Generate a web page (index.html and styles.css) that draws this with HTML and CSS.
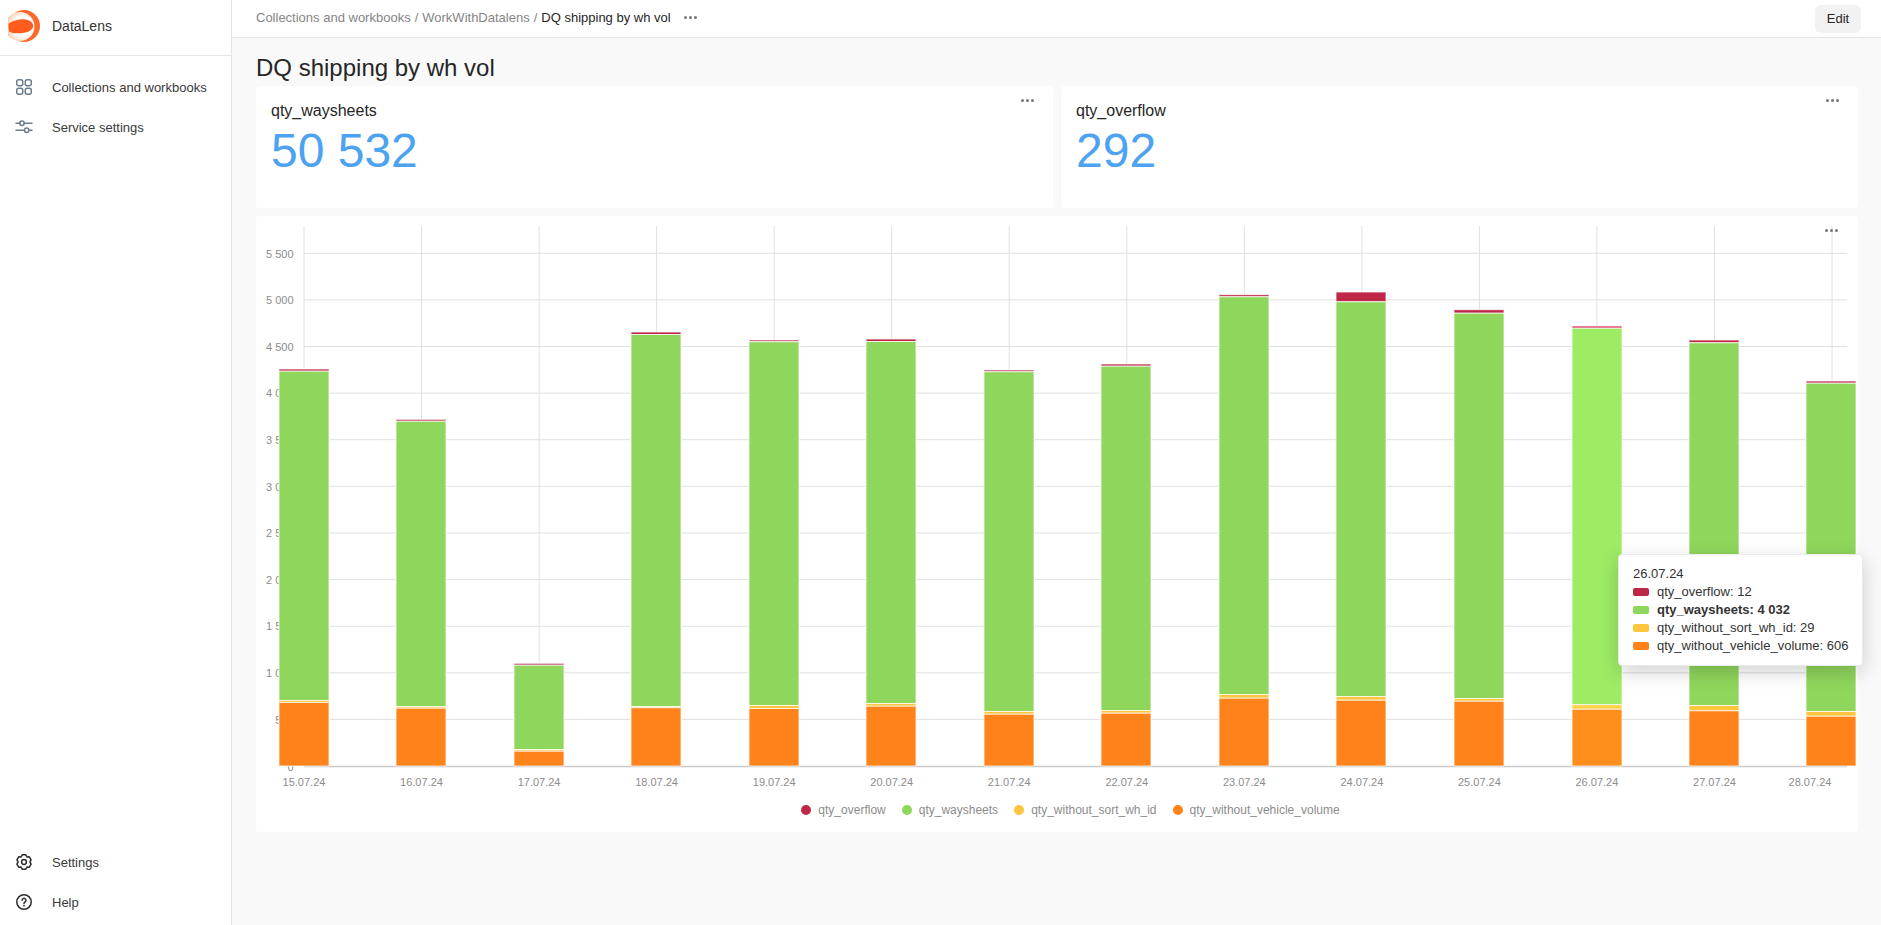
FILE: index.html
```html
<!DOCTYPE html>
<html lang="en">
<head>
<meta charset="utf-8">
<title>DQ shipping by wh vol</title>
<link rel="stylesheet" href="styles.css">
</head>
<body>
<div class="app">
  <aside class="sidebar">
    <div class="brand">
      <svg class="logo" width="32" height="32" viewBox="0 0 32 32">
        <defs>
          <radialGradient id="logoInner" cx="0.6" cy="0.5" r="0.62">
            <stop offset="0.55" stop-color="#ffffff"/>
            <stop offset="0.85" stop-color="#ffd9c4"/>
            <stop offset="1" stop-color="#ff9a66"/>
          </radialGradient>
        </defs>
        <circle cx="16" cy="16" r="16" fill="#fb6a2a"/>
        <circle cx="12" cy="16.500" r="14.500" fill="url(#logoInner)"/>
        <path d="M.5 13.500C6 10 12 9 16 9.300C21 9.500 25 12.500 25.300 16C25 20 20 23 12 23.300C8 23.500 4 23 1.300 21.700C.5 19 .2 16 .5 13.500Z" fill="#ff5c1e"/>
      </svg>
      <span class="brand-name">DataLens</span>
    </div>
    <nav class="nav">
      <a class="nav-item">
        <svg class="icon icon-slate" width="16" height="16" viewBox="0 0 16 16"><rect x=".75" y=".75" width="6" height="6" rx="2"/><rect x="9.250" y=".75" width="6" height="6" rx="2"/><rect x=".75" y="9.250" width="6" height="6" rx="2"/><rect x="9.250" y="9.250" width="6" height="6" rx="2"/></svg>
        <span>Collections and workbooks</span>
      </a>
      <a class="nav-item">
        <svg class="icon icon-slate" width="16" height="16" viewBox="0 0 16 16"><path d="M0 4.300H3.800M8.200 4.300H16M0 11.300H8.400M13 11.300H16"/><circle cx="6" cy="4.300" r="2.200"/><circle cx="10.700" cy="11.300" r="2.200"/></svg>
        <span>Service settings</span>
      </a>
    </nav>
    <nav class="nav nav-bottom">
      <a class="nav-item">
        <svg class="icon icon-dark" width="16" height="16" viewBox="0 0 16 16"><path d="M9.790 .82H6.210L5.050 2.890L2.680 2.860L.89 5.960L2.100 8L.89 10.040L2.680 13.140L5.050 13.110L6.210 15.180H9.790L10.950 13.110L13.320 13.140L15.110 10.040L13.900 8L15.110 5.960L13.320 2.860L10.950 2.890Z"/><circle cx="8" cy="8" r="2.400"/></svg>
        <span>Settings</span>
      </a>
      <a class="nav-item">
        <svg class="icon icon-dark" width="16" height="16" viewBox="0 0 16 16"><circle cx="8" cy="8" r="7.250"/><path d="M6.100 6.300A1.950 1.950 0 1 1 9.200 7.900C8.500 8.400 8 8.800 8 9.600"/><circle class="icon-dot" cx="8" cy="11.700" r=".9"/></svg>
        <span>Help</span>
      </a>
    </nav>
  </aside>

  <main class="main">
    <header class="topbar">
      <div class="crumbs">
        <span class="crumb">Collections and workbooks</span>
        <span class="crumb-sep">/</span>
        <span class="crumb">WorkWithDatalens</span>
        <span class="crumb-sep">/</span>
        <span class="crumb-current">DQ shipping by wh vol</span>
        <span class="dots dots-crumb"><i></i><i></i><i></i></span>
      </div>
      <button class="edit-btn">Edit</button>
    </header>

    <div class="page">
      <h1 class="title">DQ shipping by wh vol</h1>
      <div class="metrics">
        <section class="card metric">
          <span class="dots dots-card"><i></i><i></i><i></i></span>
          <div class="metric-label">qty_waysheets</div>
          <div class="metric-value">50 532</div>
        </section>
        <section class="card metric">
          <span class="dots dots-card"><i></i><i></i><i></i></span>
          <div class="metric-label">qty_overflow</div>
          <div class="metric-value">292</div>
        </section>
      </div>

      <section class="card chart-card">
        <span class="dots dots-chart"><i></i><i></i><i></i></span>
        <svg class="chart" width="1602" height="580" viewBox="256 216 1602 580">
          <g class="grid">
            <path d="M304 226V766M421.500 226V766M539.100 226V766M656.600 226V766M774.200 226V766M891.700 226V766M1009.200 226V766M1126.800 226V766M1244.300 226V766M1361.900 226V766M1479.400 226V766M1596.900 226V766M1714.500 226V766M1832 226V766"/>
            <path d="M304 253.300H1847M304 299.900H1847M304 346.500H1847M304 393.100H1847M304 439.700H1847M304 486.300H1847M304 533H1847M304 579.600H1847M304 626.200H1847M304 672.800H1847M304 719.400H1847"/>
          </g>
          <g class="y-labels">
            <text x="293.500" y="257.500">5 500</text>
            <text x="293.500" y="304">5 000</text>
            <text x="293.500" y="350.500">4 500</text>
            <text x="293.500" y="397">4 000</text>
            <text x="293.500" y="444">3 500</text>
            <text x="293.500" y="490.500">3 000</text>
            <text x="293.500" y="537">2 500</text>
            <text x="293.500" y="584">2 000</text>
            <text x="293.500" y="630">1 500</text>
            <text x="293.500" y="677">1 000</text>
            <text x="293.500" y="723.500">500</text>
            <text x="293.500" y="771">0</text>
          </g>
          <path class="axis" d="M304 766.500H1847"/>
          <g class="bars">
            <g class="s-red">
              <rect x="279" y="369" width="50" height="2.200"/><rect x="396" y="419.300" width="50" height="1.900"/><rect x="514" y="663.300" width="50" height="1.900"/><rect x="631" y="332" width="50" height="2.500"/><rect x="749" y="340" width="50" height="1.800"/><rect x="866" y="339" width="50" height="2.500"/><rect x="984" y="370" width="50" height="1.800"/><rect x="1101" y="364" width="50" height="2.200"/><rect x="1219" y="294.700" width="50" height="2.100"/><rect x="1336" y="292" width="50" height="9.800"/><rect x="1454" y="309.700" width="50" height="3.500"/><rect class="hl" x="1572" y="326" width="50" height="2.200"/><rect x="1689" y="340" width="50" height="2.800"/><rect x="1806" y="381" width="50" height="2.200"/>
            </g>
            <g class="s-green">
              <rect x="279" y="371.200" width="50" height="329.300"/><rect x="396" y="421.200" width="50" height="285.300"/><rect x="514" y="665.200" width="50" height="84.300"/><rect x="631" y="334.500" width="50" height="372"/><rect x="749" y="341.800" width="50" height="363.700"/><rect x="866" y="341.500" width="50" height="362"/><rect x="984" y="371.800" width="50" height="339.700"/><rect x="1101" y="366.200" width="50" height="344.300"/><rect x="1219" y="296.800" width="50" height="397.700"/><rect x="1336" y="301.800" width="50" height="394.700"/><rect x="1454" y="313.200" width="50" height="385.300"/><rect class="hl" x="1572" y="328.200" width="50" height="376.600"/><rect x="1689" y="342.800" width="50" height="362.700"/><rect x="1806" y="383.200" width="50" height="328.300"/>
            </g>
            <g class="s-yellow">
              <rect x="279" y="700.500" width="50" height="2"/><rect x="396" y="706.500" width="50" height="1.700"/><rect x="514" y="749.500" width="50" height="1.700"/><rect x="631" y="706.500" width="50" height="1.300"/><rect x="749" y="705.500" width="50" height="3"/><rect x="866" y="703.500" width="50" height="2.700"/><rect x="984" y="711.500" width="50" height="2.700"/><rect x="1101" y="710.500" width="50" height="2.700"/><rect x="1219" y="694.500" width="50" height="3.700"/><rect x="1336" y="696.500" width="50" height="3.700"/><rect x="1454" y="698.500" width="50" height="2.700"/><rect class="hl" x="1572" y="704.800" width="50" height="4.400"/><rect x="1689" y="705.500" width="50" height="5.300"/><rect x="1806" y="711.500" width="50" height="4.700"/>
            </g>
            <g class="s-orange">
              <rect x="279" y="702.500" width="50" height="63.500"/><rect x="396" y="708.200" width="50" height="57.800"/><rect x="514" y="751.200" width="50" height="14.800"/><rect x="631" y="707.800" width="50" height="58.200"/><rect x="749" y="708.500" width="50" height="57.500"/><rect x="866" y="706.200" width="50" height="59.800"/><rect x="984" y="714.200" width="50" height="51.800"/><rect x="1101" y="713.200" width="50" height="52.800"/><rect x="1219" y="698.200" width="50" height="67.800"/><rect x="1336" y="700.200" width="50" height="65.800"/><rect x="1454" y="701.200" width="50" height="64.800"/><rect class="hl" x="1572" y="709.200" width="50" height="56.800"/><rect x="1689" y="710.800" width="50" height="55.200"/><rect x="1806" y="716.200" width="50" height="49.800"/>
            </g>
          </g>
          <g class="x-labels">
            <text x="304" y="786">15.07.24</text>
            <text x="421.500" y="786">16.07.24</text>
            <text x="539.100" y="786">17.07.24</text>
            <text x="656.600" y="786">18.07.24</text>
            <text x="774.200" y="786">19.07.24</text>
            <text x="891.700" y="786">20.07.24</text>
            <text x="1009.200" y="786">21.07.24</text>
            <text x="1126.800" y="786">22.07.24</text>
            <text x="1244.300" y="786">23.07.24</text>
            <text x="1361.900" y="786">24.07.24</text>
            <text x="1479.400" y="786">25.07.24</text>
            <text x="1596.900" y="786">26.07.24</text>
            <text x="1714.500" y="786">27.07.24</text>
            <text x="1810" y="786">28.07.24</text>
          </g>
        </svg>
        <div class="legend">
          <span class="legend-item"><i class="legend-dot c-red"></i>qty_overflow</span>
          <span class="legend-item"><i class="legend-dot c-green"></i>qty_waysheets</span>
          <span class="legend-item"><i class="legend-dot c-yellow"></i>qty_without_sort_wh_id</span>
          <span class="legend-item"><i class="legend-dot c-orange"></i>qty_without_vehicle_volume</span>
        </div>
      </section>
    </div>

    <div class="tooltip">
      <div class="tip-row">26.07.24</div>
      <div class="tip-row"><i class="tip-swatch c-red"></i>qty_overflow: 12</div>
      <div class="tip-row tip-active"><i class="tip-swatch c-green"></i>qty_waysheets: 4 032</div>
      <div class="tip-row"><i class="tip-swatch c-yellow"></i>qty_without_sort_wh_id: 29</div>
      <div class="tip-row"><i class="tip-swatch c-orange"></i>qty_without_vehicle_volume: 606</div>
    </div>
  </main>
</div>
</body>
</html>
```

FILE: styles.css
```css
* { box-sizing: border-box; }

html, body {
  margin: 0;
  height: 100%;
  overflow: hidden;
}

body {
  font-family: "Liberation Sans", Arial, sans-serif;
  font-size: 13px;
  color: #262626;
  background: #f9f9f9;
}

.app {
  display: flex;
  height: 100vh;
}

/* Sidebar */
.sidebar {
  width: 232px;
  flex: none;
  display: flex;
  flex-direction: column;
  background: #fff;
  border-right: 1px solid #e5e5e5;
}

.brand {
  height: 56px;
  display: flex;
  align-items: center;
  gap: 12px;
  padding: 0 8px;
  flex: none;
  border-bottom: 1px solid #e5e5e5;
}

.logo { flex: none; margin-top: -4px; }

.brand-name {
  font-size: 14px;
  color: #333;
  margin-top: -4px;
}

.nav {
  display: flex;
  flex-direction: column;
  padding-top: 11px;
}

.nav-bottom {
  margin-top: auto;
  padding: 0 0 3px;
}

.nav-item {
  height: 40px;
  display: flex;
  align-items: center;
  gap: 20px;
  padding-left: 16px;
  color: #3a3a3a;
}

.icon {
  flex: none;
  fill: none;
  stroke-width: 1.5;
  stroke-linejoin: round;
  stroke-linecap: round;
  overflow: visible;
}

.icon-slate { stroke: #6d7c8f; }
.icon-dark { stroke: #2e2e2e; }
.icon-dot { fill: #2e2e2e; stroke: none; }

/* Main column */
.main {
  flex: 1;
  min-width: 0;
  position: relative;
  display: flex;
  flex-direction: column;
}

.topbar {
  height: 38px;
  flex: none;
  display: flex;
  align-items: center;
  justify-content: space-between;
  padding: 0 20px 2px 24px;
  background: #fff;
  border-bottom: 1px solid #e5e5e5;
}

.crumbs {
  display: flex;
  align-items: center;
  gap: 4px;
}

.crumb, .crumb-sep { color: #858585; }
.crumb-current { color: #262626; }

.dots {
  display: inline-flex;
  gap: 2px;
}

.dots i {
  width: 3px;
  height: 3px;
  border-radius: 50%;
  background: #777;
}

.dots-crumb { margin-left: 9px; }

.edit-btn {
  width: 46px;
  height: 28px;
  margin-top: 2px;
  padding: 0;
  border: 0;
  border-radius: 6px;
  background: #f2f2f2;
  color: #262626;
  font: inherit;
}

.page {
  flex: 1;
  padding: 0 23px 0 24px;
}

.title {
  margin: 0;
  height: 48px;
  padding-top: 16px;
  font-size: 24px;
  line-height: 28px;
  font-weight: 400;
  color: #262626;
}

.metrics {
  display: grid;
  grid-template-columns: 1fr 1fr;
  gap: 8px;
  margin-bottom: 8px;
}

.card {
  position: relative;
  background: #fff;
  border-radius: 4px;
}

.metric {
  height: 122px;
  padding: 16px 15px;
}

.metric-label {
  font-size: 16px;
  line-height: 18px;
  color: #262626;
}

.metric-value {
  margin-top: 3px;
  font-size: 48px;
  line-height: 56px;
  color: #4da2f1;
}

.dots-card {
  position: absolute;
  top: 13px;
  right: 19px;
}

.dots-chart {
  position: absolute;
  top: 13px;
  right: 20px;
  z-index: 1;
}

/* Chart */
.chart-card {
  height: 616px;
}

.chart {
  display: block;
}

.grid path {
  fill: none;
  stroke: #e0e0e0;
  stroke-width: 1;
}

.y-labels text {
  font-size: 11px;
  fill: #8c8c8c;
  text-anchor: end;
}

.x-labels text {
  font-size: 11px;
  fill: #8c8c8c;
  text-anchor: middle;
}

.axis {
  stroke: #c9c9c9;
  stroke-width: 1.5;
  fill: none;
}

.bars rect {
  stroke: #fff;
  stroke-width: 1;
  stroke-opacity: .75;
}

.s-red { fill: #bf2747; }
.s-green { fill: #8fd65c; }
.s-yellow { fill: #ffc53d; }
.s-orange { fill: #ff831a; }
.s-red .hl { fill: #d92b50; }
.s-green .hl { fill: #9dec64; }
.s-yellow .hl { fill: #ffd044; }
.s-orange .hl { fill: #ff8f1d; }

.legend {
  height: 28px;
  padding-left: 27px;
  display: flex;
  justify-content: center;
  align-items: center;
  gap: 16px;
  font-size: 12px;
  color: #8c8c8c;
}

.legend-item {
  display: inline-flex;
  align-items: center;
  gap: 7px;
}

.legend-dot {
  width: 10px;
  height: 10px;
  border-radius: 50%;
}

.c-red { background: #bf2747; }
.c-green { background: #8fd65c; }
.c-yellow { background: #ffc53d; }
.c-orange { background: #ff831a; }

/* Tooltip */
.tooltip {
  position: absolute;
  left: 1386px;
  top: 554px;
  width: 245px;
  height: 112px;
  padding: 10px 14px;
  background: #fff;
  border: 1px solid #eaeaea;
  border-radius: 4px;
  box-shadow: 0 6px 20px rgba(0, 0, 0, .18);
  color: #333;
}

.tip-row {
  height: 18px;
  line-height: 18px;
  display: flex;
  align-items: center;
  white-space: nowrap;
}

.tip-active { font-weight: 700; }

.tip-swatch {
  width: 16px;
  height: 8px;
  margin-right: 8px;
  border-radius: 2px;
  flex: none;
}
```
